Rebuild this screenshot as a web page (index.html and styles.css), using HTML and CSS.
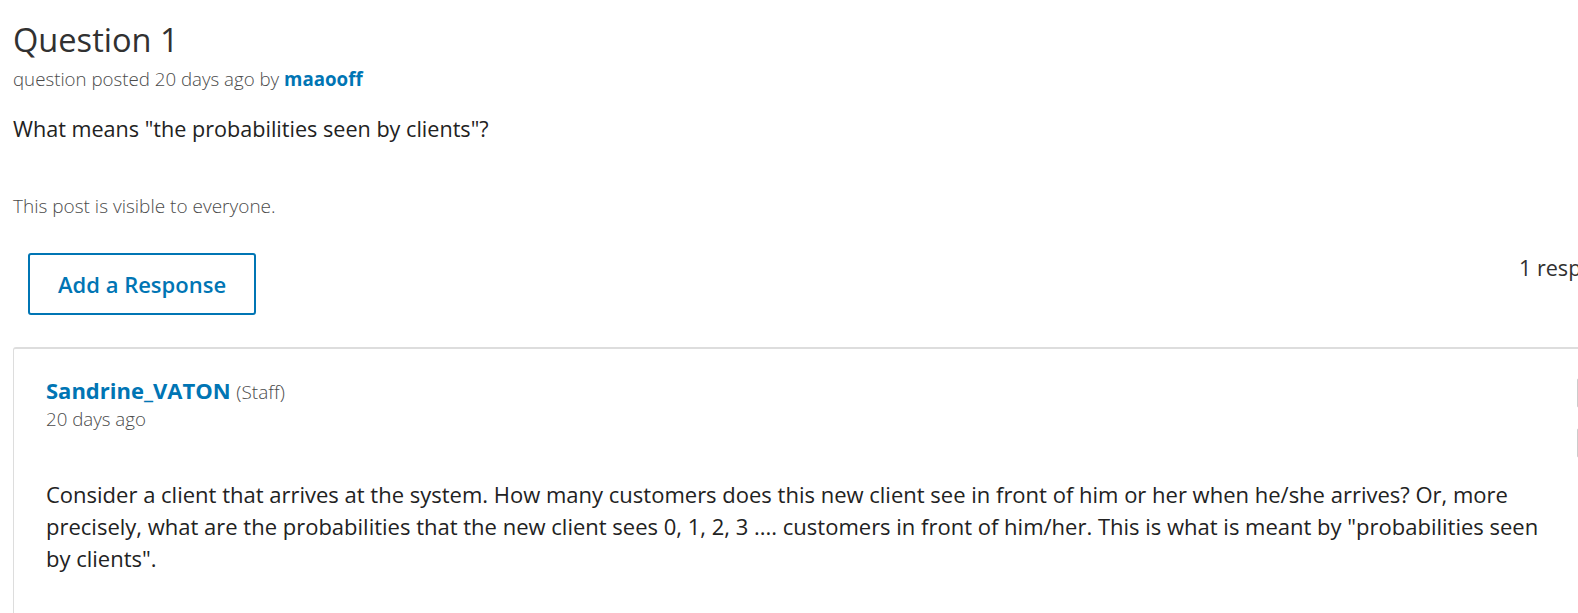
FILE: index.html
```html
<!DOCTYPE html>
<html lang="en">
<head>
<meta charset="utf-8">
<title>Question 1</title>
<link rel="stylesheet" href="styles.css">
</head>
<body>
<main class="thread">
  <h1 class="thread-title">Question 1</h1>
  <p class="thread-meta">question posted 20 days ago by <a class="username" href="#">maaooff</a></p>
  <p class="thread-body">What means "the probabilities seen by clients"?</p>
  <p class="visibility">This post is visible to everyone.</p>

  <div class="response-bar">
    <button class="add-response" type="button">Add a Response</button>
    <span class="response-count">1 response</span>
  </div>

  <article class="response">
    <header class="response-header">
      <div class="author-block">
        <div class="author-line"><a class="author" href="#">Sandrine_VATON</a> <span class="role">(Staff)</span></div>
        <div class="posted">20 days ago</div>
      </div>
      <div class="actions">
        <span class="action-btn"></span>
        <span class="action-btn"></span>
      </div>
    </header>
    <p class="response-body">Consider a client that arrives at the system. How many customers does this new client see in front of him or her when he/she arrives? Or, more precisely, what are the probabilities that the new client sees 0, 1, 2, 3 .... customers in front of him/her. This is what is meant by "probabilities seen by clients".</p>
  </article>
</main>
</body>
</html>
```

FILE: styles.css
```css
html {
  overflow: hidden;
}
body {
  margin: 0;
  background: #ffffff;
  font-family: "Open Sans", "Noto Sans", "Liberation Sans", sans-serif;
  color: #222222;
}
.thread {
  width: 1630px;
  padding-left: 13px;
}
.thread-title {
  margin: 20px 0 0;
  font-size: 32.6px;
  font-weight: 400;
  line-height: 40px;
  color: #313131;
}
.thread-meta {
  margin: 6px 0 0;
  font-size: 18.7px;
  font-weight: 300;
  line-height: 26px;
  color: #4b4b4b;
}
.username {
  color: #0075b4;
  font-weight: 700;
  text-decoration: none;
}
.thread-body {
  margin: 21px 0 0;
  font-size: 21.6px;
  line-height: 32px;
  color: #222222;
}
.visibility {
  margin: 47px 0 0;
  font-size: 19px;
  font-weight: 300;
  line-height: 28px;
  color: #4b4b4b;
}
.response-bar {
  display: flex;
  justify-content: space-between;
  align-items: flex-start;
  margin-top: 33px;
  padding-left: 15px;
  padding-right: 13px;
}
.add-response {
  font-family: inherit;
  font-size: 22px;
  font-weight: 600;
  line-height: 30px;
  color: #0075b4;
  background: #ffffff;
  border: 2px solid #0075b4;
  border-radius: 3px;
  padding: 14px 28px;
  cursor: pointer;
}
.response-count {
  font-size: 21.6px;
  line-height: 30px;
  color: #313131;
}
.response {
  margin-top: 32px;
  border-top: 2px solid #dddddd;
  border-left: 1px solid #dddddd;
  border-top-left-radius: 3px;
  padding: 27px 32px 40px;
}
.response-header {
  display: flex;
  justify-content: space-between;
  align-items: flex-start;
}
.author-line {
  font-size: 22px;
  line-height: 28px;
}
.author {
  color: #0075b4;
  font-weight: 700;
  text-decoration: none;
}
.role {
  font-size: 19px;
  font-weight: 300;
  color: #4b4b4b;
}
.posted {
  font-size: 18.7px;
  font-weight: 300;
  line-height: 26px;
  color: #4b4b4b;
}
.actions {
  display: flex;
  flex-direction: column;
  gap: 20px;
  margin-top: 2px;
}
.action-btn {
  display: block;
  box-sizing: border-box;
  width: 34px;
  height: 30px;
  border: 1px solid #cccccc;
  border-radius: 2px;
}
.response-body {
  margin: 20px 56px 0 0;
  font-size: 22px;
  line-height: 32px;
  color: #222222;
}
```
